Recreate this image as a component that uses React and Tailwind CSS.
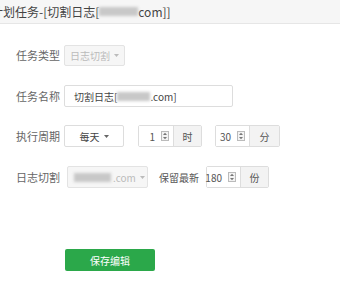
import React from "react";

const font = { fontFamily: '"Noto Sans CJK SC", "Noto Sans", sans-serif' };

function Blur({ w }) {
  return <span className={`inline-block h-[9px] bg-[#c8c8c8] blur-[1.5px] ${w}`} />;
}

function Caret({ color = "#666" }) {
  return (
    <svg width="5" height="3" viewBox="0 0 5 3" className="ml-[4px] shrink-0">
      <path d="M0 0 H5 L2.5 3 Z" fill={color} />
    </svg>
  );
}

function Spinner() {
  return (
    <svg width="8" height="10" viewBox="0 0 8 10" className="shrink-0">
      <rect x="0.5" y="0.5" width="7" height="9" fill="#f3f3f3" stroke="#bbb" />
      <path d="M4 1.8 L6 4 H2 Z" fill="#777" />
      <path d="M4 8.2 L6 6 H2 Z" fill="#777" />
    </svg>
  );
}

function NumberAddon({ value, unit, inputW, addonW }) {
  return (
    <div className="flex h-[22px] border border-[#ddd] rounded-[2px] text-[10px] text-[#555]">
      <div className={`flex items-center justify-end pr-[4px] gap-[6px] bg-white ${inputW}`}>
        <span>{value}</span>
        <Spinner />
      </div>
      <div className={`flex items-center justify-center border-l border-[#ddd] bg-[#f3f3f3] ${addonW}`}>
        {unit}
      </div>
    </div>
  );
}

function Row({ label, children, className = "" }) {
  return (
    <div className={`flex items-center ${className}`}>
      <div className="w-[48px] text-[11px] text-[#666]">{label}</div>
      {children}
    </div>
  );
}

export default function App() {
  return (
    <div className="w-[340px] h-[286px] bg-white overflow-hidden" style={font}>
      <div className="h-[24px] bg-[#f6f6f6] border-b border-[#e6e6e6] flex items-center overflow-hidden">
        <div className="-ml-[9px] text-[12px] text-[#444] whitespace-nowrap flex items-center">
          计划任务-[切割日志[<Blur w="w-[39px]" />com]]
        </div>
      </div>

      <div className="pl-[16px]">
        <Row label="任务类型" className="mt-[21px]">
          <div className="w-[61px] h-[21px] border border-[#e3e3e3] rounded-[2px] bg-[#f6f6f6] flex items-center justify-center text-[10px] text-[#bbb]">
            日志切割
            <Caret color="#bbb" />
          </div>
        </Row>

        <Row label="任务名称" className="mt-[19px]">
          <div className="w-[169px] h-[22px] border border-[#ddd] rounded-[2px] flex items-center pl-[9px] text-[10px] text-[#444]">
            切割日志[<Blur w="w-[33px]" />.com]
          </div>
        </Row>

        <Row label="执行周期" className="mt-[18px]">
          <div className="w-[60px] h-[22px] border border-[#ddd] rounded-[2px] flex items-center justify-center text-[10px] text-[#444]">
            每天
            <Caret />
          </div>
          <div className="ml-[14px]">
            <NumberAddon value="1" unit="时" inputW="w-[34px]" addonW="w-[28px]" />
          </div>
          <div className="ml-[13px]">
            <NumberAddon value="30" unit="分" inputW="w-[33px]" addonW="w-[30px]" />
          </div>
        </Row>

        <Row label="日志切割" className="mt-[19px]">
          <div className="ml-[3px] w-[81px] h-[22px] border border-[#e3e3e3] rounded-[2px] bg-[#f6f6f6] flex items-center pl-[6px] text-[10px] text-[#bbb]">
            <Blur w="w-[37px]" />
            <span className="ml-[2px]">.com</span>
            <Caret color="#bbb" />
          </div>
          <div className="ml-[11px] text-[10px] text-[#555]">保留最新</div>
          <div className="ml-[7px]">
            <NumberAddon value="180" unit="份" inputW="w-[33px]" addonW="w-[28px]" />
          </div>
        </Row>

        <div className="mt-[61px] ml-[49px] w-[90px] h-[22px] rounded-[2px] bg-[#2ba84a] flex items-center justify-center text-[10px] text-white">
          保存编辑
        </div>
      </div>
    </div>
  );
}
